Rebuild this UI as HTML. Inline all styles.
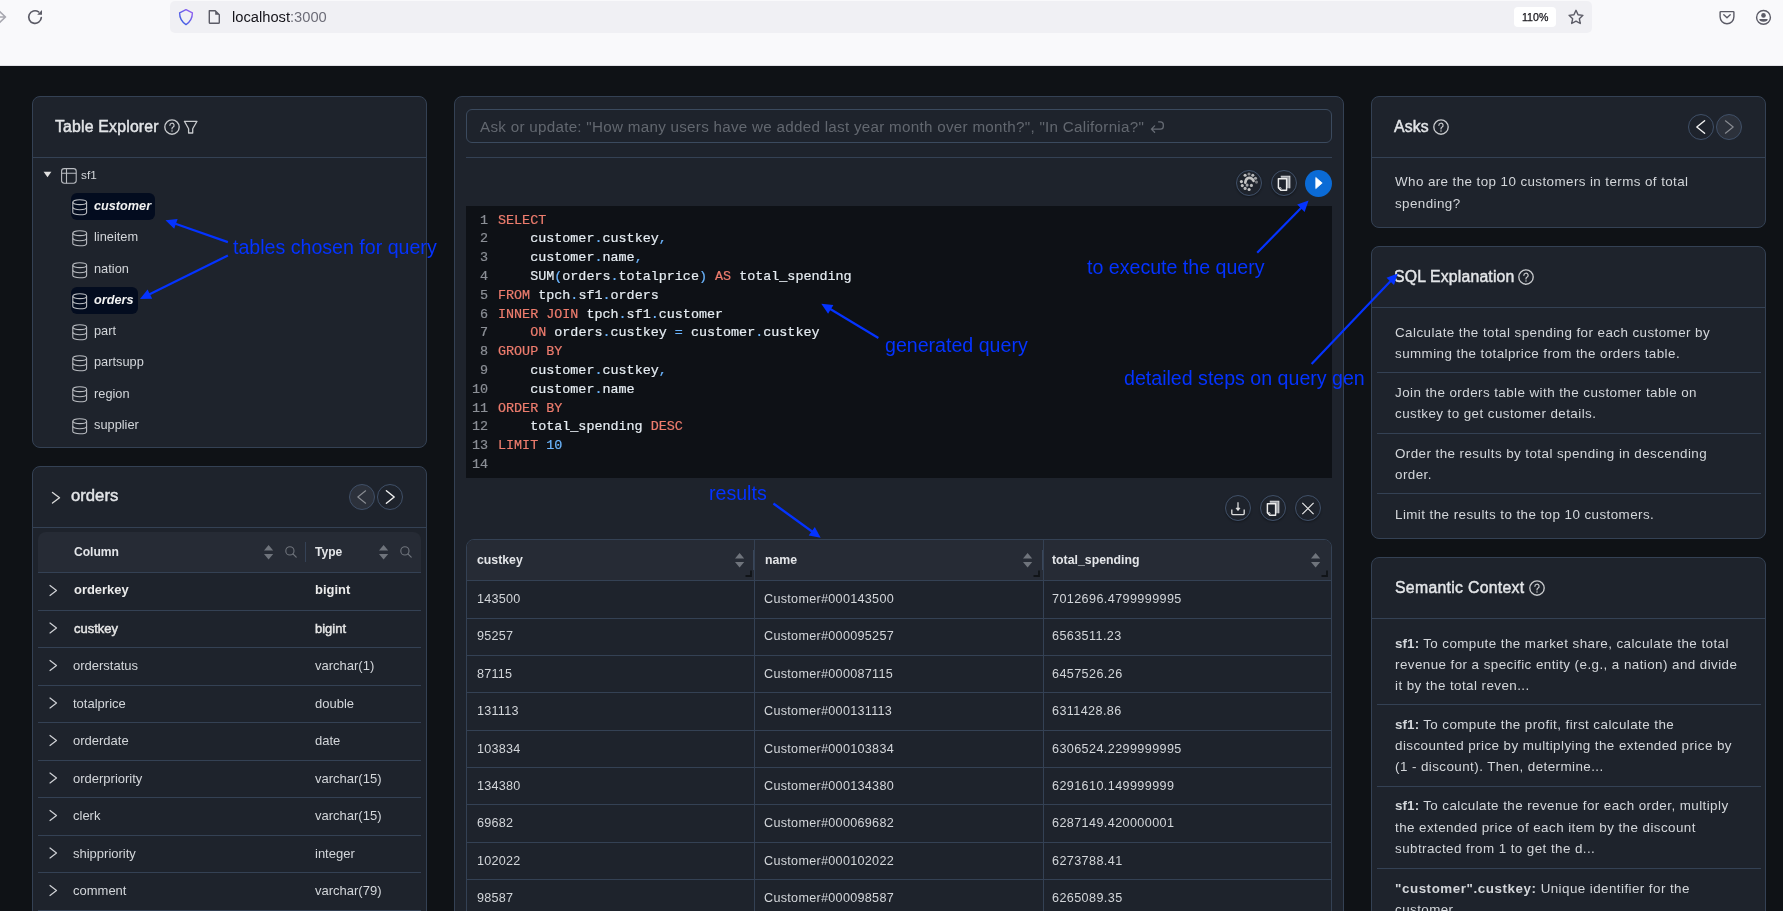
<!DOCTYPE html><html><head><meta charset="utf-8"><style>
*{box-sizing:border-box;margin:0;padding:0}
html,body{width:1783px;height:911px;overflow:hidden;background:#0f1216;font-family:"Liberation Sans",sans-serif}
.abs{position:absolute}
.panel{position:absolute;background:#1e232c;border:1px solid #344154;border-radius:8px}
.t{position:absolute;white-space:nowrap;line-height:1;will-change:transform}
.div{position:absolute;height:1px;background:#344154}
.ann{position:absolute;white-space:nowrap;color:#0433ff;font-size:19.6px;line-height:1;will-change:transform}
.med{-webkit-text-stroke:0.35px currentColor}
.ln{position:absolute;font-family:"Liberation Mono",monospace;font-size:13.4px;line-height:18.8px;white-space:pre;-webkit-text-stroke:0.2px currentColor;will-change:transform}
.kw{color:#ee7d6e}.pn{color:#6cb6ff}.nm{color:#6cb6ff}
svg{position:absolute;overflow:visible}
b{letter-spacing:0.1px}
</style></head><body>
<div class="abs" style="left:0;top:0;width:1783px;height:66px;background:#f9f9fb;border-bottom:1px solid #e2e2e7"></div>
<div class="abs" style="left:170px;top:1px;width:1422px;height:32px;background:#f0f0f4;border-radius:5px"></div>
<svg style="left:0;top:0" width="20" height="35"><path d="M-1 11 L5.5 17 L-1 23 M-3 17 H5.5" fill="none" stroke="#a8a8b0" stroke-width="1.6" stroke-linecap="round" stroke-linejoin="round"/></svg>
<svg style="left:0;top:0" width="60" height="35"><path d="M41.3 17.5 A6.3 6.3 0 1 1 38.6 11.9" fill="none" stroke="#5b5b66" stroke-width="1.7" stroke-linecap="round"/><path d="M42 10 L42 14.8 L37.2 14.8 Z" fill="#5b5b66"/></svg>
<svg style="left:170px;top:0" width="40" height="35"><defs><linearGradient id="sg" x1="0" y1="1" x2="1" y2="0"><stop offset="0" stop-color="#2d5ee0"/><stop offset="1" stop-color="#9b5ff2"/></linearGradient></defs><path d="M16 9.6 L22.4 12.8 C22.4 18.5 20.5 21.8 16 24.6 C11.5 21.8 9.6 18.5 9.6 12.8 Z" fill="none" stroke="url(#sg)" stroke-width="1.4" stroke-linejoin="round"/></svg>
<svg style="left:200px;top:0" width="30" height="35"><path d="M9.3 10.7 H15.2 L19.3 14.8 V22.4 Q19.3 23.3 18.4 23.3 H10.2 Q9.3 23.3 9.3 22.4 Z" fill="none" stroke="#5b5b66" stroke-width="1.4" stroke-linejoin="round"/><path d="M15.2 10.7 V14.8 H19.3 Z" fill="#5b5b66"/></svg>
<div class="t" style="left:232px;top:10.26px;font-size:14.7px;color:#15141a;font-weight:normal;font-style:normal;">localhost<span style="color:#6d6d78">:3000</span></div>
<div class="abs" style="left:1514px;top:7px;width:42px;height:20px;background:#fff;border-radius:4px"></div>
<div class="t" style="left:1522px;top:12.03px;font-size:10.6px;color:#15141a;font-weight:normal;font-style:normal;-webkit-text-stroke:0.25px #15141a">110%</div>
<svg style="left:0;top:0" width="1783" height="40"><polygon points="1576.00,10.30 1578.06,14.77 1582.94,15.34 1579.33,18.68 1580.29,23.51 1576.00,21.10 1571.71,23.51 1572.67,18.68 1569.06,15.34 1573.94,14.77" fill="none" stroke="#5b5b66" stroke-width="1.4" stroke-linejoin="round"/></svg>
<svg style="left:1700px;top:0" width="83" height="40"><path d="M20.8 11.6 H33.2 Q33.9 11.6 33.9 12.3 V16.8 A6.5 6.5 0 0 1 20.1 16.8 V12.3 Q20.1 11.6 20.8 11.6 Z" fill="none" stroke="#5b5b66" stroke-width="1.4"/><path d="M23.8 14.8 L27 17.8 L30.2 14.8" fill="none" stroke="#5b5b66" stroke-width="1.4" stroke-linecap="round" stroke-linejoin="round"/><circle cx="63.5" cy="17.4" r="6.9" fill="none" stroke="#5b5b66" stroke-width="1.4"/><circle cx="63.5" cy="15.4" r="2.3" fill="#5b5b66"/><path d="M59.3 19.1 H67.7 A4.2 2.7 0 0 1 59.3 19.1 Z" fill="#5b5b66"/></svg>
<div class="panel" style="left:32px;top:96px;width:395px;height:352px"></div>
<div class="div" style="left:33px;top:157px;width:393px"></div>
<div class="t" style="left:55px;top:119.03px;font-size:15.8px;color:#e3e5e8;font-weight:normal;font-style:normal;-webkit-text-stroke:0.45px #e3e5e8;letter-spacing:0.2px">Table Explorer</div>
<svg style="left:161.5px;top:116.5px" width="20" height="20"><circle cx="10" cy="10" r="7.2" fill="none" stroke="#c8cacd" stroke-width="1.35"/><path d="M7.9 8.3 A2.1 2.1 0 1 1 10.9 10.2 Q10 10.7 10 11.7 V12" fill="none" stroke="#c8cacd" stroke-width="1.2" stroke-linecap="round"/><circle cx="10" cy="14.1" r="0.75" fill="#c8cacd"/></svg>
<svg style="left:0;top:0" width="1" height="1"><path d="M184.4 121.3 H197 L192.7 128.8 V133 H188.6 V128.8 Z" fill="none" stroke="#c8cacd" stroke-width="1.3" stroke-linejoin="round"/></svg>
<svg style="left:0;top:0" width="1" height="1"><path d="M43.6 171.8 H51.4 L47.5 177.2 Z" fill="#e0e0e0"/></svg>
<svg style="left:61px;top:168px" width="16" height="16"><rect x="0.6" y="0.6" width="14.6" height="14.6" rx="2.6" fill="none" stroke="#b9bcc1" stroke-width="1.1"/><path d="M0.6 5.2 H15.2 M5.5 0.6 V15.2" stroke="#b9bcc1" stroke-width="1.1"/></svg>
<div class="t" style="left:81px;top:170.01px;font-size:11.8px;color:#d3d6da;font-weight:normal;font-style:normal;">sf1</div>
<div class="abs" style="left:71px;top:193.00px;width:84px;height:27px;background:#030c1f;border-radius:6px"></div>
<div class="t" style="left:94px;top:200.25px;font-size:12.7px;color:#f2f2f2;font-weight:bold;font-style:italic;">customer</div>
<svg style="left:72px;top:199px" width="16" height="17"><g fill="none" stroke="#b9bcc1" stroke-width="1.1"><ellipse cx="7.7" cy="3.2" rx="6.9" ry="2.4"/><path d="M0.8 3.2 V13.4 A6.9 2.4 0 0 0 14.6 13.4 V3.2"/><path d="M0.8 8.3 A6.9 2.4 0 0 0 14.6 8.3"/></g></svg>
<div class="t" style="left:94px;top:231.41px;font-size:12.8px;color:#d3d6da;font-weight:normal;font-style:normal;">lineitem</div>
<svg style="left:72px;top:230px" width="16" height="17"><g fill="none" stroke="#b9bcc1" stroke-width="1.1"><ellipse cx="7.7" cy="3.2" rx="6.9" ry="2.4"/><path d="M0.8 3.2 V13.4 A6.9 2.4 0 0 0 14.6 13.4 V3.2"/><path d="M0.8 8.3 A6.9 2.4 0 0 0 14.6 8.3"/></g></svg>
<div class="t" style="left:94px;top:262.66px;font-size:12.8px;color:#d3d6da;font-weight:normal;font-style:normal;">nation</div>
<svg style="left:72px;top:262px" width="16" height="17"><g fill="none" stroke="#b9bcc1" stroke-width="1.1"><ellipse cx="7.7" cy="3.2" rx="6.9" ry="2.4"/><path d="M0.8 3.2 V13.4 A6.9 2.4 0 0 0 14.6 13.4 V3.2"/><path d="M0.8 8.3 A6.9 2.4 0 0 0 14.6 8.3"/></g></svg>
<div class="abs" style="left:71px;top:286.75px;width:67px;height:27px;background:#030c1f;border-radius:6px"></div>
<div class="t" style="left:94px;top:294.00px;font-size:12.7px;color:#f2f2f2;font-weight:bold;font-style:italic;">orders</div>
<svg style="left:72px;top:293px" width="16" height="17"><g fill="none" stroke="#b9bcc1" stroke-width="1.1"><ellipse cx="7.7" cy="3.2" rx="6.9" ry="2.4"/><path d="M0.8 3.2 V13.4 A6.9 2.4 0 0 0 14.6 13.4 V3.2"/><path d="M0.8 8.3 A6.9 2.4 0 0 0 14.6 8.3"/></g></svg>
<div class="t" style="left:94px;top:325.16px;font-size:12.8px;color:#d3d6da;font-weight:normal;font-style:normal;">part</div>
<svg style="left:72px;top:324px" width="16" height="17"><g fill="none" stroke="#b9bcc1" stroke-width="1.1"><ellipse cx="7.7" cy="3.2" rx="6.9" ry="2.4"/><path d="M0.8 3.2 V13.4 A6.9 2.4 0 0 0 14.6 13.4 V3.2"/><path d="M0.8 8.3 A6.9 2.4 0 0 0 14.6 8.3"/></g></svg>
<div class="t" style="left:94px;top:356.41px;font-size:12.8px;color:#d3d6da;font-weight:normal;font-style:normal;">partsupp</div>
<svg style="left:72px;top:355px" width="16" height="17"><g fill="none" stroke="#b9bcc1" stroke-width="1.1"><ellipse cx="7.7" cy="3.2" rx="6.9" ry="2.4"/><path d="M0.8 3.2 V13.4 A6.9 2.4 0 0 0 14.6 13.4 V3.2"/><path d="M0.8 8.3 A6.9 2.4 0 0 0 14.6 8.3"/></g></svg>
<div class="t" style="left:94px;top:387.66px;font-size:12.8px;color:#d3d6da;font-weight:normal;font-style:normal;">region</div>
<svg style="left:72px;top:386px" width="16" height="17"><g fill="none" stroke="#b9bcc1" stroke-width="1.1"><ellipse cx="7.7" cy="3.2" rx="6.9" ry="2.4"/><path d="M0.8 3.2 V13.4 A6.9 2.4 0 0 0 14.6 13.4 V3.2"/><path d="M0.8 8.3 A6.9 2.4 0 0 0 14.6 8.3"/></g></svg>
<div class="t" style="left:94px;top:418.91px;font-size:12.8px;color:#d3d6da;font-weight:normal;font-style:normal;">supplier</div>
<svg style="left:72px;top:418px" width="16" height="17"><g fill="none" stroke="#b9bcc1" stroke-width="1.1"><ellipse cx="7.7" cy="3.2" rx="6.9" ry="2.4"/><path d="M0.8 3.2 V13.4 A6.9 2.4 0 0 0 14.6 13.4 V3.2"/><path d="M0.8 8.3 A6.9 2.4 0 0 0 14.6 8.3"/></g></svg>
<div class="panel" style="left:32px;top:466px;width:395px;height:480px"></div>
<div class="div" style="left:33px;top:527px;width:393px"></div>
<svg style="left:0;top:0" width="1" height="1"><path d="M52.5 492.5 L59.5 497.75 L52.5 503.0" fill="none" stroke="#d8d8d8" stroke-width="1.4" stroke-linecap="round" stroke-linejoin="round"/></svg>
<div class="t" style="left:71px;top:487.96px;font-size:16.7px;color:#e3e5e8;font-weight:normal;font-style:normal;-webkit-text-stroke:0.45px #e3e5e8">orders</div>
<div class="abs" style="left:349px;top:484px;width:26px;height:26px;border-radius:50%;background:#2c313b;border:1px solid #405068"></div><svg style="left:0;top:0" width="1" height="1"><path d="M365.6 490.8 L357.8 497.0 L365.6 503.2" fill="none" stroke="#8a8d93" stroke-width="1.1" stroke-linecap="round" stroke-linejoin="round"/></svg>
<div class="abs" style="left:377px;top:484px;width:26px;height:26px;border-radius:50%;background:#1e232c;border:1px solid #405068"></div><svg style="left:0;top:0" width="1" height="1"><path d="M386.4 490.8 L394.2 497.0 L386.4 503.2" fill="none" stroke="#f2f2f2" stroke-width="1.4" stroke-linecap="round" stroke-linejoin="round"/></svg>
<div class="abs" style="left:38px;top:532px;width:383px;height:40px;background:#262b35;border-radius:8px 8px 0 0"></div>
<div class="div" style="left:38px;top:572px;width:383px"></div>
<div class="t" style="left:73.5px;top:545.96px;font-size:12.1px;color:#e3e5e8;font-weight:bold;font-style:normal;">Column</div>
<div class="t" style="left:315px;top:545.96px;font-size:12.1px;color:#e3e5e8;font-weight:bold;font-style:normal;">Type</div>
<svg style="left:263.8px;top:544.6px" width="10" height="15"><path d="M4.6 0 L9.2 5.6 H0 Z M0 9 H9.2 L4.6 14.6 Z" fill="#6f747c"/></svg>
<svg style="left:284.5px;top:545.5px" width="13" height="13"><circle cx="4.9" cy="4.9" r="4.1" fill="none" stroke="#6f747c" stroke-width="1.1"/><path d="M7.9 7.9 L11.2 11.2" stroke="#6f747c" stroke-width="1.2" stroke-linecap="round"/></svg>
<svg style="left:378.8px;top:544.6px" width="10" height="15"><path d="M4.6 0 L9.2 5.6 H0 Z M0 9 H9.2 L4.6 14.6 Z" fill="#6f747c"/></svg>
<svg style="left:399.5px;top:545.5px" width="13" height="13"><circle cx="4.9" cy="4.9" r="4.1" fill="none" stroke="#6f747c" stroke-width="1.1"/><path d="M7.9 7.9 L11.2 11.2" stroke="#6f747c" stroke-width="1.2" stroke-linecap="round"/></svg>
<div class="abs" style="left:305px;top:542px;width:1px;height:20px;background:#354256"></div>
<div class="t" style="left:73.5px;top:584.24px;font-size:12.95px;color:#ebebeb;font-weight:bold;font-style:normal;">orderkey</div>
<div class="t" style="left:315px;top:584.24px;font-size:12.95px;color:#ebebeb;font-weight:bold;font-style:normal;">bigint</div>
<svg style="left:0;top:0" width="1" height="1"><path d="M50 585.5 L56.5 590.5 L50 595.5" fill="none" stroke="#d0d2d6" stroke-width="1.2" stroke-linecap="round" stroke-linejoin="round"/></svg>
<div class="div" style="left:38px;top:609.5px;width:383px"></div>
<div class="t" style="left:73.5px;top:621.70px;font-size:13.0px;color:#e6e6e6;font-weight:normal;font-style:normal;-webkit-text-stroke:0.45px #e6e6e6">custkey</div>
<div class="t" style="left:315px;top:621.70px;font-size:13.0px;color:#e6e6e6;font-weight:normal;font-style:normal;-webkit-text-stroke:0.45px #e6e6e6">bigint</div>
<svg style="left:0;top:0" width="1" height="1"><path d="M50 623.0 L56.5 628.0 L50 633.0" fill="none" stroke="#d0d2d6" stroke-width="1.2" stroke-linecap="round" stroke-linejoin="round"/></svg>
<div class="div" style="left:38px;top:647.0px;width:383px"></div>
<div class="t" style="left:73px;top:659.20px;font-size:13.0px;color:#d3d6da;font-weight:normal;font-style:normal;">orderstatus</div>
<div class="t" style="left:315px;top:659.20px;font-size:13.0px;color:#d3d6da;font-weight:normal;font-style:normal;">varchar(1)</div>
<svg style="left:0;top:0" width="1" height="1"><path d="M50 660.5 L56.5 665.5 L50 670.5" fill="none" stroke="#d0d2d6" stroke-width="1.2" stroke-linecap="round" stroke-linejoin="round"/></svg>
<div class="div" style="left:38px;top:684.5px;width:383px"></div>
<div class="t" style="left:73px;top:696.70px;font-size:13.0px;color:#d3d6da;font-weight:normal;font-style:normal;">totalprice</div>
<div class="t" style="left:315px;top:696.70px;font-size:13.0px;color:#d3d6da;font-weight:normal;font-style:normal;">double</div>
<svg style="left:0;top:0" width="1" height="1"><path d="M50 698.0 L56.5 703.0 L50 708.0" fill="none" stroke="#d0d2d6" stroke-width="1.2" stroke-linecap="round" stroke-linejoin="round"/></svg>
<div class="div" style="left:38px;top:722.0px;width:383px"></div>
<div class="t" style="left:73px;top:734.20px;font-size:13.0px;color:#d3d6da;font-weight:normal;font-style:normal;">orderdate</div>
<div class="t" style="left:315px;top:734.20px;font-size:13.0px;color:#d3d6da;font-weight:normal;font-style:normal;">date</div>
<svg style="left:0;top:0" width="1" height="1"><path d="M50 735.5 L56.5 740.5 L50 745.5" fill="none" stroke="#d0d2d6" stroke-width="1.2" stroke-linecap="round" stroke-linejoin="round"/></svg>
<div class="div" style="left:38px;top:759.5px;width:383px"></div>
<div class="t" style="left:73px;top:771.70px;font-size:13.0px;color:#d3d6da;font-weight:normal;font-style:normal;">orderpriority</div>
<div class="t" style="left:315px;top:771.70px;font-size:13.0px;color:#d3d6da;font-weight:normal;font-style:normal;">varchar(15)</div>
<svg style="left:0;top:0" width="1" height="1"><path d="M50 773.0 L56.5 778.0 L50 783.0" fill="none" stroke="#d0d2d6" stroke-width="1.2" stroke-linecap="round" stroke-linejoin="round"/></svg>
<div class="div" style="left:38px;top:797.0px;width:383px"></div>
<div class="t" style="left:73px;top:809.20px;font-size:13.0px;color:#d3d6da;font-weight:normal;font-style:normal;">clerk</div>
<div class="t" style="left:315px;top:809.20px;font-size:13.0px;color:#d3d6da;font-weight:normal;font-style:normal;">varchar(15)</div>
<svg style="left:0;top:0" width="1" height="1"><path d="M50 810.5 L56.5 815.5 L50 820.5" fill="none" stroke="#d0d2d6" stroke-width="1.2" stroke-linecap="round" stroke-linejoin="round"/></svg>
<div class="div" style="left:38px;top:834.5px;width:383px"></div>
<div class="t" style="left:73px;top:846.70px;font-size:13.0px;color:#d3d6da;font-weight:normal;font-style:normal;">shippriority</div>
<div class="t" style="left:315px;top:846.70px;font-size:13.0px;color:#d3d6da;font-weight:normal;font-style:normal;">integer</div>
<svg style="left:0;top:0" width="1" height="1"><path d="M50 848.0 L56.5 853.0 L50 858.0" fill="none" stroke="#d0d2d6" stroke-width="1.2" stroke-linecap="round" stroke-linejoin="round"/></svg>
<div class="div" style="left:38px;top:872.0px;width:383px"></div>
<div class="t" style="left:73px;top:884.20px;font-size:13.0px;color:#d3d6da;font-weight:normal;font-style:normal;">comment</div>
<div class="t" style="left:315px;top:884.20px;font-size:13.0px;color:#d3d6da;font-weight:normal;font-style:normal;">varchar(79)</div>
<svg style="left:0;top:0" width="1" height="1"><path d="M50 885.5 L56.5 890.5 L50 895.5" fill="none" stroke="#d0d2d6" stroke-width="1.2" stroke-linecap="round" stroke-linejoin="round"/></svg>
<div class="div" style="left:38px;top:909.5px;width:383px"></div>
<div class="panel" style="left:454px;top:96px;width:890px;height:850px"></div>
<div class="abs" style="left:466px;top:109px;width:866px;height:34px;border:1px solid #3b4a5e;border-radius:6px"></div>
<div class="t" style="left:480px;top:119.23px;font-size:15.2px;color:#62676f;font-weight:normal;font-style:normal;letter-spacing:0.28px">Ask or update: "How many users have we added last year month over month?", "In California?"</div>
<svg style="left:0;top:0" width="1" height="1"><path d="M1158.6 121.8 H1160.4 A2.9 2.9 0 0 1 1163.3 124.7 V126.2 A2.9 2.9 0 0 1 1160.4 129.1 H1151.4 M1154.6 125.9 L1151.4 129.1 L1154.6 132.3" fill="none" stroke="#676c75" stroke-width="1.3" stroke-linecap="round" stroke-linejoin="round"/></svg>
<div class="div" style="left:466px;top:157px;width:866px"></div>
<div class="abs" style="left:1236px;top:170px;width:26px;height:26px;border-radius:50%;border:1px solid #405068;box-shadow:0 1px 2px rgba(0,0,0,.35)"></div><svg style="left:1236px;top:170px" width="26" height="26"><circle cx="13.0" cy="4.0" r="1.55" fill="#d2d2d2" opacity="0.6"/><circle cx="9.1" cy="5.3" r="1.55" fill="#d2d2d2" opacity="0.9"/><circle cx="16.8" cy="5.3" r="1.55" fill="#d2d2d2" opacity="0.85"/><circle cx="19.5" cy="8.3" r="1.55" fill="#d2d2d2" opacity="0.75"/><circle cx="20.5" cy="12.1" r="1.55" fill="#d2d2d2" opacity="0.5"/><circle cx="5.4" cy="11.6" r="1.55" fill="#d2d2d2" opacity="0.95"/><circle cx="6.3" cy="15.6" r="1.55" fill="#d2d2d2" opacity="0.9"/><circle cx="9.1" cy="18.4" r="1.55" fill="#d2d2d2" opacity="0.85"/><circle cx="13.1" cy="19.5" r="1.55" fill="#d2d2d2" opacity="0.95"/><circle cx="15.399999999999999" cy="15.4" r="1.55" fill="#d2d2d2" opacity="0.85"/><circle cx="11.1" cy="15.1" r="1.55" fill="#d2d2d2" opacity="0.75"/><path d="M9.3 12.6 Q9.6 9.0 12.2 8.0 Q15.6 7.2 17.6 10.8" fill="none" stroke="#c4c4c4" stroke-width="2.6" stroke-linecap="round"/></svg>
<div class="abs" style="left:1271px;top:170px;width:26px;height:26px;border-radius:50%;border:1px solid #405068;box-shadow:0 1px 2px rgba(0,0,0,.35)"></div><svg style="left:1271px;top:170px" width="26" height="26"><path d="M9.8 6.2 H18.8 V18.2 H15.8 V8.6 H9.8 Z" fill="#9a9da3"/><path d="M9.8 6.2 H18.8 V18.2" fill="none" stroke="#d9dbde" stroke-width="1.1"/><path d="M7.4 8.7 H15.6 V20.2 H9.8 L7.4 17.8 Z" fill="#1e232c" stroke="#ececec" stroke-width="1.45" stroke-linejoin="round"/><circle cx="9.1" cy="18.5" r="1" fill="none" stroke="#ececec" stroke-width="0.9"/></svg>
<div class="abs" style="left:1305px;top:169.5px;width:27px;height:27px;border-radius:50%;background:#0b6bd6"></div>
<svg style="left:0;top:0" width="1" height="1"><path d="M1315.8 177.5 L1322.2 183 L1315.8 188.6 Z" fill="#fff" stroke="#fff" stroke-width="0.8" stroke-linejoin="round"/></svg>
<div class="abs" style="left:466px;top:206px;width:866px;height:272px;background:#0e1116"></div>
<div class="ln" style="left:468px;width:20px;text-align:right;top:211.5px;color:#8b8f96">1</div>
<div class="ln" style="left:498px;top:211.5px;color:#e6edf3"><span class="kw">SELECT</span></div>
<div class="ln" style="left:468px;width:20px;text-align:right;top:230.3px;color:#8b8f96">2</div>
<div class="ln" style="left:498px;top:230.3px;color:#e6edf3">    customer<span class="pn">.</span>custkey<span class="pn">,</span></div>
<div class="ln" style="left:468px;width:20px;text-align:right;top:249.1px;color:#8b8f96">3</div>
<div class="ln" style="left:498px;top:249.1px;color:#e6edf3">    customer<span class="pn">.</span>name<span class="pn">,</span></div>
<div class="ln" style="left:468px;width:20px;text-align:right;top:267.9px;color:#8b8f96">4</div>
<div class="ln" style="left:498px;top:267.9px;color:#e6edf3">    SUM<span class="pn">(</span>orders<span class="pn">.</span>totalprice<span class="pn">)</span> <span class="kw">AS</span> total_spending</div>
<div class="ln" style="left:468px;width:20px;text-align:right;top:286.7px;color:#8b8f96">5</div>
<div class="ln" style="left:498px;top:286.7px;color:#e6edf3"><span class="kw">FROM</span> tpch<span class="pn">.</span>sf1<span class="pn">.</span>orders</div>
<div class="ln" style="left:468px;width:20px;text-align:right;top:305.5px;color:#8b8f96">6</div>
<div class="ln" style="left:498px;top:305.5px;color:#e6edf3"><span class="kw">INNER JOIN</span> tpch<span class="pn">.</span>sf1<span class="pn">.</span>customer</div>
<div class="ln" style="left:468px;width:20px;text-align:right;top:324.3px;color:#8b8f96">7</div>
<div class="ln" style="left:498px;top:324.3px;color:#e6edf3">    <span class="kw">ON</span> orders<span class="pn">.</span>custkey <span class="pn">=</span> customer<span class="pn">.</span>custkey</div>
<div class="ln" style="left:468px;width:20px;text-align:right;top:343.1px;color:#8b8f96">8</div>
<div class="ln" style="left:498px;top:343.1px;color:#e6edf3"><span class="kw">GROUP BY</span></div>
<div class="ln" style="left:468px;width:20px;text-align:right;top:361.9px;color:#8b8f96">9</div>
<div class="ln" style="left:498px;top:361.9px;color:#e6edf3">    customer<span class="pn">.</span>custkey<span class="pn">,</span></div>
<div class="ln" style="left:468px;width:20px;text-align:right;top:380.7px;color:#8b8f96">10</div>
<div class="ln" style="left:498px;top:380.7px;color:#e6edf3">    customer<span class="pn">.</span>name</div>
<div class="ln" style="left:468px;width:20px;text-align:right;top:399.5px;color:#8b8f96">11</div>
<div class="ln" style="left:498px;top:399.5px;color:#e6edf3"><span class="kw">ORDER BY</span></div>
<div class="ln" style="left:468px;width:20px;text-align:right;top:418.3px;color:#8b8f96">12</div>
<div class="ln" style="left:498px;top:418.3px;color:#e6edf3">    total_spending <span class="kw">DESC</span></div>
<div class="ln" style="left:468px;width:20px;text-align:right;top:437.1px;color:#8b8f96">13</div>
<div class="ln" style="left:498px;top:437.1px;color:#e6edf3"><span class="kw">LIMIT</span> <span class="nm">10</span></div>
<div class="ln" style="left:468px;width:20px;text-align:right;top:455.9px;color:#8b8f96">14</div>
<div class="ln" style="left:498px;top:455.9px;color:#e6edf3"></div>
<div class="abs" style="left:1225px;top:495.3px;width:26px;height:26px;border-radius:50%;border:1px solid #405068;box-shadow:0 1px 2px rgba(0,0,0,.35)"></div><svg style="left:1225px;top:495.3px" width="26" height="26"><path d="M13 7.3 V15.2" stroke="#e8e8e8" stroke-width="1.2"/><path d="M11 13.2 L13 15.5 L15 13.2 Z" fill="#e8e8e8" stroke="#e8e8e8" stroke-width="0.8" stroke-linejoin="round"/><path d="M6.8 14.6 V18.6 Q6.8 19.6 7.8 19.6 H18.2 Q19.2 19.6 19.2 18.6 V14.6" fill="none" stroke="#dcdcdc" stroke-width="1.35"/></svg>
<div class="abs" style="left:1260px;top:495.3px;width:26px;height:26px;border-radius:50%;border:1px solid #405068;box-shadow:0 1px 2px rgba(0,0,0,.35)"></div><svg style="left:1260px;top:495.3px" width="26" height="26"><path d="M9.8 6.2 H18.8 V18.2 H15.8 V8.6 H9.8 Z" fill="#9a9da3"/><path d="M9.8 6.2 H18.8 V18.2" fill="none" stroke="#d9dbde" stroke-width="1.1"/><path d="M7.4 8.7 H15.6 V20.2 H9.8 L7.4 17.8 Z" fill="#1e232c" stroke="#ececec" stroke-width="1.45" stroke-linejoin="round"/><circle cx="9.1" cy="18.5" r="1" fill="none" stroke="#ececec" stroke-width="0.9"/></svg>
<div class="abs" style="left:1295px;top:495.3px;width:26px;height:26px;border-radius:50%;border:1px solid #405068;box-shadow:0 1px 2px rgba(0,0,0,.35)"></div><svg style="left:1295px;top:495.3px" width="26" height="26"><path d="M7.3 7.8 L18.6 19.2 M18.6 7.8 L7.3 19.2" stroke="#e8e8e8" stroke-width="1.15"/></svg>
<div class="abs" style="left:466px;top:539px;width:866px;height:420px;border:1px solid #344154;border-radius:8px 8px 0 0;overflow:hidden"><div class="abs" style="left:0;top:0;width:866px;height:41px;background:#262b35"></div></div>
<div class="div" style="left:466px;top:580px;width:866px"></div>
<div class="abs" style="left:754px;top:539px;width:1px;height:380px;background:#344154"></div>
<div class="abs" style="left:1043px;top:539px;width:1px;height:380px;background:#344154"></div>
<div class="abs" style="left:752.5px;top:550px;width:1px;height:20px;background:#3a475a"></div>
<div class="abs" style="left:1041.5px;top:550px;width:1px;height:20px;background:#3a475a"></div>
<div class="t" style="left:476.5px;top:553.59px;font-size:12.3px;color:#e3e5e8;font-weight:bold;font-style:normal;">custkey</div>
<div class="t" style="left:764.5px;top:553.59px;font-size:12.3px;color:#e3e5e8;font-weight:bold;font-style:normal;">name</div>
<div class="t" style="left:1052.2px;top:553.59px;font-size:12.3px;color:#e3e5e8;font-weight:bold;font-style:normal;">total_spending</div>
<svg style="left:734.8px;top:552.8px" width="10" height="15"><path d="M4.6 0 L9.2 5.6 H0 Z M0 9 H9.2 L4.6 14.6 Z" fill="#6f747c"/></svg>
<svg style="left:744.8px;top:570px" width="8" height="8"><path d="M6 0.5 V6 H0.5" fill="none" stroke="#111418" stroke-width="1.8"/></svg>
<svg style="left:1022.8px;top:552.8px" width="10" height="15"><path d="M4.6 0 L9.2 5.6 H0 Z M0 9 H9.2 L4.6 14.6 Z" fill="#6f747c"/></svg>
<svg style="left:1032.8px;top:570px" width="8" height="8"><path d="M6 0.5 V6 H0.5" fill="none" stroke="#111418" stroke-width="1.8"/></svg>
<svg style="left:1310.6px;top:552.8px" width="10" height="15"><path d="M4.6 0 L9.2 5.6 H0 Z M0 9 H9.2 L4.6 14.6 Z" fill="#6f747c"/></svg>
<svg style="left:1320.6px;top:570px" width="8" height="8"><path d="M6 0.5 V6 H0.5" fill="none" stroke="#111418" stroke-width="1.8"/></svg>
<div class="t" style="left:476.5px;top:593.13px;font-size:12.6px;color:#d3d6da;font-weight:normal;font-style:normal;letter-spacing:0.25px">143500</div>
<div class="t" style="left:764.2px;top:593.13px;font-size:12.6px;color:#d3d6da;font-weight:normal;font-style:normal;letter-spacing:0.3px">Customer#000143500</div>
<div class="t" style="left:1052.2px;top:593.13px;font-size:12.6px;color:#d3d6da;font-weight:normal;font-style:normal;letter-spacing:0.4px">7012696.4799999995</div>
<div class="div" style="left:466px;top:617.5px;width:866px"></div>
<div class="t" style="left:476.5px;top:630.48px;font-size:12.6px;color:#d3d6da;font-weight:normal;font-style:normal;letter-spacing:0.25px">95257</div>
<div class="t" style="left:764.2px;top:630.48px;font-size:12.6px;color:#d3d6da;font-weight:normal;font-style:normal;letter-spacing:0.3px">Customer#000095257</div>
<div class="t" style="left:1052.2px;top:630.48px;font-size:12.6px;color:#d3d6da;font-weight:normal;font-style:normal;letter-spacing:0.4px">6563511.23</div>
<div class="div" style="left:466px;top:654.9px;width:866px"></div>
<div class="t" style="left:476.5px;top:667.83px;font-size:12.6px;color:#d3d6da;font-weight:normal;font-style:normal;letter-spacing:0.25px">87115</div>
<div class="t" style="left:764.2px;top:667.83px;font-size:12.6px;color:#d3d6da;font-weight:normal;font-style:normal;letter-spacing:0.3px">Customer#000087115</div>
<div class="t" style="left:1052.2px;top:667.83px;font-size:12.6px;color:#d3d6da;font-weight:normal;font-style:normal;letter-spacing:0.4px">6457526.26</div>
<div class="div" style="left:466px;top:692.2px;width:866px"></div>
<div class="t" style="left:476.5px;top:705.18px;font-size:12.6px;color:#d3d6da;font-weight:normal;font-style:normal;letter-spacing:0.25px">131113</div>
<div class="t" style="left:764.2px;top:705.18px;font-size:12.6px;color:#d3d6da;font-weight:normal;font-style:normal;letter-spacing:0.3px">Customer#000131113</div>
<div class="t" style="left:1052.2px;top:705.18px;font-size:12.6px;color:#d3d6da;font-weight:normal;font-style:normal;letter-spacing:0.4px">6311428.86</div>
<div class="div" style="left:466px;top:729.5px;width:866px"></div>
<div class="t" style="left:476.5px;top:742.53px;font-size:12.6px;color:#d3d6da;font-weight:normal;font-style:normal;letter-spacing:0.25px">103834</div>
<div class="t" style="left:764.2px;top:742.53px;font-size:12.6px;color:#d3d6da;font-weight:normal;font-style:normal;letter-spacing:0.3px">Customer#000103834</div>
<div class="t" style="left:1052.2px;top:742.53px;font-size:12.6px;color:#d3d6da;font-weight:normal;font-style:normal;letter-spacing:0.4px">6306524.2299999995</div>
<div class="div" style="left:466px;top:766.9px;width:866px"></div>
<div class="t" style="left:476.5px;top:779.88px;font-size:12.6px;color:#d3d6da;font-weight:normal;font-style:normal;letter-spacing:0.25px">134380</div>
<div class="t" style="left:764.2px;top:779.88px;font-size:12.6px;color:#d3d6da;font-weight:normal;font-style:normal;letter-spacing:0.3px">Customer#000134380</div>
<div class="t" style="left:1052.2px;top:779.88px;font-size:12.6px;color:#d3d6da;font-weight:normal;font-style:normal;letter-spacing:0.4px">6291610.149999999</div>
<div class="div" style="left:466px;top:804.2px;width:866px"></div>
<div class="t" style="left:476.5px;top:817.23px;font-size:12.6px;color:#d3d6da;font-weight:normal;font-style:normal;letter-spacing:0.25px">69682</div>
<div class="t" style="left:764.2px;top:817.23px;font-size:12.6px;color:#d3d6da;font-weight:normal;font-style:normal;letter-spacing:0.3px">Customer#000069682</div>
<div class="t" style="left:1052.2px;top:817.23px;font-size:12.6px;color:#d3d6da;font-weight:normal;font-style:normal;letter-spacing:0.4px">6287149.420000001</div>
<div class="div" style="left:466px;top:841.6px;width:866px"></div>
<div class="t" style="left:476.5px;top:854.58px;font-size:12.6px;color:#d3d6da;font-weight:normal;font-style:normal;letter-spacing:0.25px">102022</div>
<div class="t" style="left:764.2px;top:854.58px;font-size:12.6px;color:#d3d6da;font-weight:normal;font-style:normal;letter-spacing:0.3px">Customer#000102022</div>
<div class="t" style="left:1052.2px;top:854.58px;font-size:12.6px;color:#d3d6da;font-weight:normal;font-style:normal;letter-spacing:0.4px">6273788.41</div>
<div class="div" style="left:466px;top:879.0px;width:866px"></div>
<div class="t" style="left:476.5px;top:891.93px;font-size:12.6px;color:#d3d6da;font-weight:normal;font-style:normal;letter-spacing:0.25px">98587</div>
<div class="t" style="left:764.2px;top:891.93px;font-size:12.6px;color:#d3d6da;font-weight:normal;font-style:normal;letter-spacing:0.3px">Customer#000098587</div>
<div class="t" style="left:1052.2px;top:891.93px;font-size:12.6px;color:#d3d6da;font-weight:normal;font-style:normal;letter-spacing:0.4px">6265089.35</div>
<div class="div" style="left:466px;top:916.3px;width:866px"></div>
<div class="panel" style="left:1371px;top:96px;width:395px;height:132px"></div>
<div class="div" style="left:1372px;top:157px;width:393px"></div>
<div class="t" style="left:1394.2px;top:118.63px;font-size:15.8px;color:#e3e5e8;font-weight:normal;font-style:normal;-webkit-text-stroke:0.45px #e3e5e8;letter-spacing:0.15px">Asks</div>
<svg style="left:1430.5px;top:116.5px" width="20" height="20"><circle cx="10" cy="10" r="7.2" fill="none" stroke="#c8cacd" stroke-width="1.35"/><path d="M7.9 8.3 A2.1 2.1 0 1 1 10.9 10.2 Q10 10.7 10 11.7 V12" fill="none" stroke="#c8cacd" stroke-width="1.2" stroke-linecap="round"/><circle cx="10" cy="14.1" r="0.75" fill="#c8cacd"/></svg>
<div class="abs" style="left:1688px;top:114px;width:26px;height:26px;border-radius:50%;background:#1e232c;border:1px solid #405068"></div><svg style="left:0;top:0" width="1" height="1"><path d="M1704.6 120.8 L1696.8 127.0 L1704.6 133.2" fill="none" stroke="#f2f2f2" stroke-width="1.4" stroke-linecap="round" stroke-linejoin="round"/></svg>
<div class="abs" style="left:1716px;top:114px;width:26px;height:26px;border-radius:50%;background:#2c313b;border:1px solid #405068"></div><svg style="left:0;top:0" width="1" height="1"><path d="M1725.4 120.8 L1733.2 127.0 L1725.4 133.2" fill="none" stroke="#8a8d93" stroke-width="1.1" stroke-linecap="round" stroke-linejoin="round"/></svg>
<div class="t" style="left:1395.3px;top:174.96px;font-size:13.4px;color:#d3d6da;font-weight:normal;font-style:normal;letter-spacing:0.41px">Who are the top 10 customers in terms of total</div>
<div class="t" style="left:1395.3px;top:196.66px;font-size:13.4px;color:#d3d6da;font-weight:normal;font-style:normal;letter-spacing:0.41px">spending?</div>
<div class="panel" style="left:1371px;top:246px;width:395px;height:293px"></div>
<div class="div" style="left:1372px;top:307px;width:393px"></div>
<div class="t" style="left:1394.2px;top:268.93px;font-size:15.8px;color:#e3e5e8;font-weight:normal;font-style:normal;-webkit-text-stroke:0.45px #e3e5e8;letter-spacing:0.17px">SQL Explanation</div>
<svg style="left:1516.3px;top:266.8px" width="20" height="20"><circle cx="10" cy="10" r="7.2" fill="none" stroke="#c8cacd" stroke-width="1.35"/><path d="M7.9 8.3 A2.1 2.1 0 1 1 10.9 10.2 Q10 10.7 10 11.7 V12" fill="none" stroke="#c8cacd" stroke-width="1.2" stroke-linecap="round"/><circle cx="10" cy="14.1" r="0.75" fill="#c8cacd"/></svg>
<div class="t" style="left:1395.3px;top:325.76px;font-size:13.4px;color:#d3d6da;font-weight:normal;font-style:normal;letter-spacing:0.43px">Calculate the total spending for each customer by</div>
<div class="t" style="left:1395.3px;top:346.66px;font-size:13.4px;color:#d3d6da;font-weight:normal;font-style:normal;letter-spacing:0.43px">summing the totalprice from the orders table.</div>
<div class="div" style="left:1377px;top:372px;width:384px"></div>
<div class="t" style="left:1395.3px;top:385.76px;font-size:13.4px;color:#d3d6da;font-weight:normal;font-style:normal;letter-spacing:0.43px">Join the orders table with the customer table on</div>
<div class="t" style="left:1395.3px;top:406.66px;font-size:13.4px;color:#d3d6da;font-weight:normal;font-style:normal;letter-spacing:0.43px">custkey to get customer details.</div>
<div class="div" style="left:1377px;top:433px;width:384px"></div>
<div class="t" style="left:1395.3px;top:446.66px;font-size:13.4px;color:#d3d6da;font-weight:normal;font-style:normal;letter-spacing:0.43px">Order the results by total spending in descending</div>
<div class="t" style="left:1395.3px;top:467.56px;font-size:13.4px;color:#d3d6da;font-weight:normal;font-style:normal;letter-spacing:0.43px">order.</div>
<div class="div" style="left:1377px;top:493px;width:384px"></div>
<div class="t" style="left:1395.3px;top:507.66px;font-size:13.4px;color:#d3d6da;font-weight:normal;font-style:normal;letter-spacing:0.43px">Limit the results to the top 10 customers.</div>
<div class="panel" style="left:1371px;top:557px;width:395px;height:400px"></div>
<div class="div" style="left:1372px;top:618px;width:393px"></div>
<div class="t" style="left:1394.5px;top:580.23px;font-size:15.8px;color:#e3e5e8;font-weight:normal;font-style:normal;-webkit-text-stroke:0.45px #e3e5e8;letter-spacing:0.3px">Semantic Context</div>
<svg style="left:1526.8px;top:578.3px" width="20" height="20"><circle cx="10" cy="10" r="7.2" fill="none" stroke="#c8cacd" stroke-width="1.35"/><path d="M7.9 8.3 A2.1 2.1 0 1 1 10.9 10.2 Q10 10.7 10 11.7 V12" fill="none" stroke="#c8cacd" stroke-width="1.2" stroke-linecap="round"/><circle cx="10" cy="14.1" r="0.75" fill="#c8cacd"/></svg>
<div class="t" style="left:1395.3px;top:636.66px;font-size:13.4px;color:#d3d6da;font-weight:normal;font-style:normal;letter-spacing:0.43px"><b>sf1:</b> To compute the market share, calculate the total</div>
<div class="t" style="left:1395.3px;top:657.76px;font-size:13.4px;color:#d3d6da;font-weight:normal;font-style:normal;letter-spacing:0.43px">revenue for a specific entity (e.g., a nation) and divide</div>
<div class="t" style="left:1395.3px;top:678.86px;font-size:13.4px;color:#d3d6da;font-weight:normal;font-style:normal;letter-spacing:0.43px">it by the total reven...</div>
<div class="div" style="left:1377px;top:704px;width:384px"></div>
<div class="t" style="left:1395.3px;top:717.56px;font-size:13.4px;color:#d3d6da;font-weight:normal;font-style:normal;letter-spacing:0.43px"><b>sf1:</b> To compute the profit, first calculate the</div>
<div class="t" style="left:1395.3px;top:738.66px;font-size:13.4px;color:#d3d6da;font-weight:normal;font-style:normal;letter-spacing:0.43px">discounted price by multiplying the extended price by</div>
<div class="t" style="left:1395.3px;top:759.76px;font-size:13.4px;color:#d3d6da;font-weight:normal;font-style:normal;letter-spacing:0.43px">(1 - discount). Then, determine...</div>
<div class="div" style="left:1377px;top:786px;width:384px"></div>
<div class="t" style="left:1395.3px;top:799.46px;font-size:13.4px;color:#d3d6da;font-weight:normal;font-style:normal;letter-spacing:0.43px"><b>sf1:</b> To calculate the revenue for each order, multiply</div>
<div class="t" style="left:1395.3px;top:820.56px;font-size:13.4px;color:#d3d6da;font-weight:normal;font-style:normal;letter-spacing:0.43px">the extended price of each item by the discount</div>
<div class="t" style="left:1395.3px;top:841.66px;font-size:13.4px;color:#d3d6da;font-weight:normal;font-style:normal;letter-spacing:0.43px">subtracted from 1 to get the d...</div>
<div class="div" style="left:1377px;top:868px;width:384px"></div>
<div class="t" style="left:1395.3px;top:881.56px;font-size:13.4px;color:#d3d6da;font-weight:normal;font-style:normal;letter-spacing:0.43px"><b style="letter-spacing:0.55px">"customer".custkey:</b> Unique identifier for the</div>
<div class="t" style="left:1395.3px;top:902.66px;font-size:13.4px;color:#d3d6da;font-weight:normal;font-style:normal;letter-spacing:0.43px">customer</div>
<div class="ann" style="left:233.3px;top:238.41px">tables chosen for query</div>
<div class="ann" style="left:1086.6px;top:257.61px">to execute the query</div>
<div class="ann" style="left:884.7px;top:336.41px">generated query</div>
<div class="ann" style="left:1123.5px;top:368.51px">detailed steps on query gen</div>
<div class="ann" style="left:709.4px;top:484.01px">results</div>
<svg style="left:0;top:0" width="1783" height="911"><line x1="227.9" y1="242.1" x2="174.0" y2="223.2" stroke="#0433ff" stroke-width="2.2"/><polygon points="165.5,220.2 177.6,218.9 174.2,228.7" fill="#0433ff"/><line x1="227.9" y1="255.5" x2="148.1" y2="295.0" stroke="#0433ff" stroke-width="2.2"/><polygon points="140,299 147.6,289.5 152.2,298.8" fill="#0433ff"/><line x1="1257.2" y1="252.7" x2="1302.3" y2="206.8" stroke="#0433ff" stroke-width="2.2"/><polygon points="1308.6,200.4 1304.6,211.9 1297.2,204.6" fill="#0433ff"/><line x1="878.4" y1="338" x2="829.0" y2="308.3" stroke="#0433ff" stroke-width="2.2"/><polygon points="821.3,303.7 833.4,304.9 828.1,313.8" fill="#0433ff"/><line x1="1311.6" y1="364" x2="1391.6" y2="279.9" stroke="#0433ff" stroke-width="2.2"/><polygon points="1397.8,273.4 1394.0,285.0 1386.5,277.8" fill="#0433ff"/><line x1="773.4" y1="503.5" x2="813.4" y2="532.5" stroke="#0433ff" stroke-width="2.2"/><polygon points="820.7,537.8 808.7,535.6 814.8,527.1" fill="#0433ff"/></svg>
</body></html>
